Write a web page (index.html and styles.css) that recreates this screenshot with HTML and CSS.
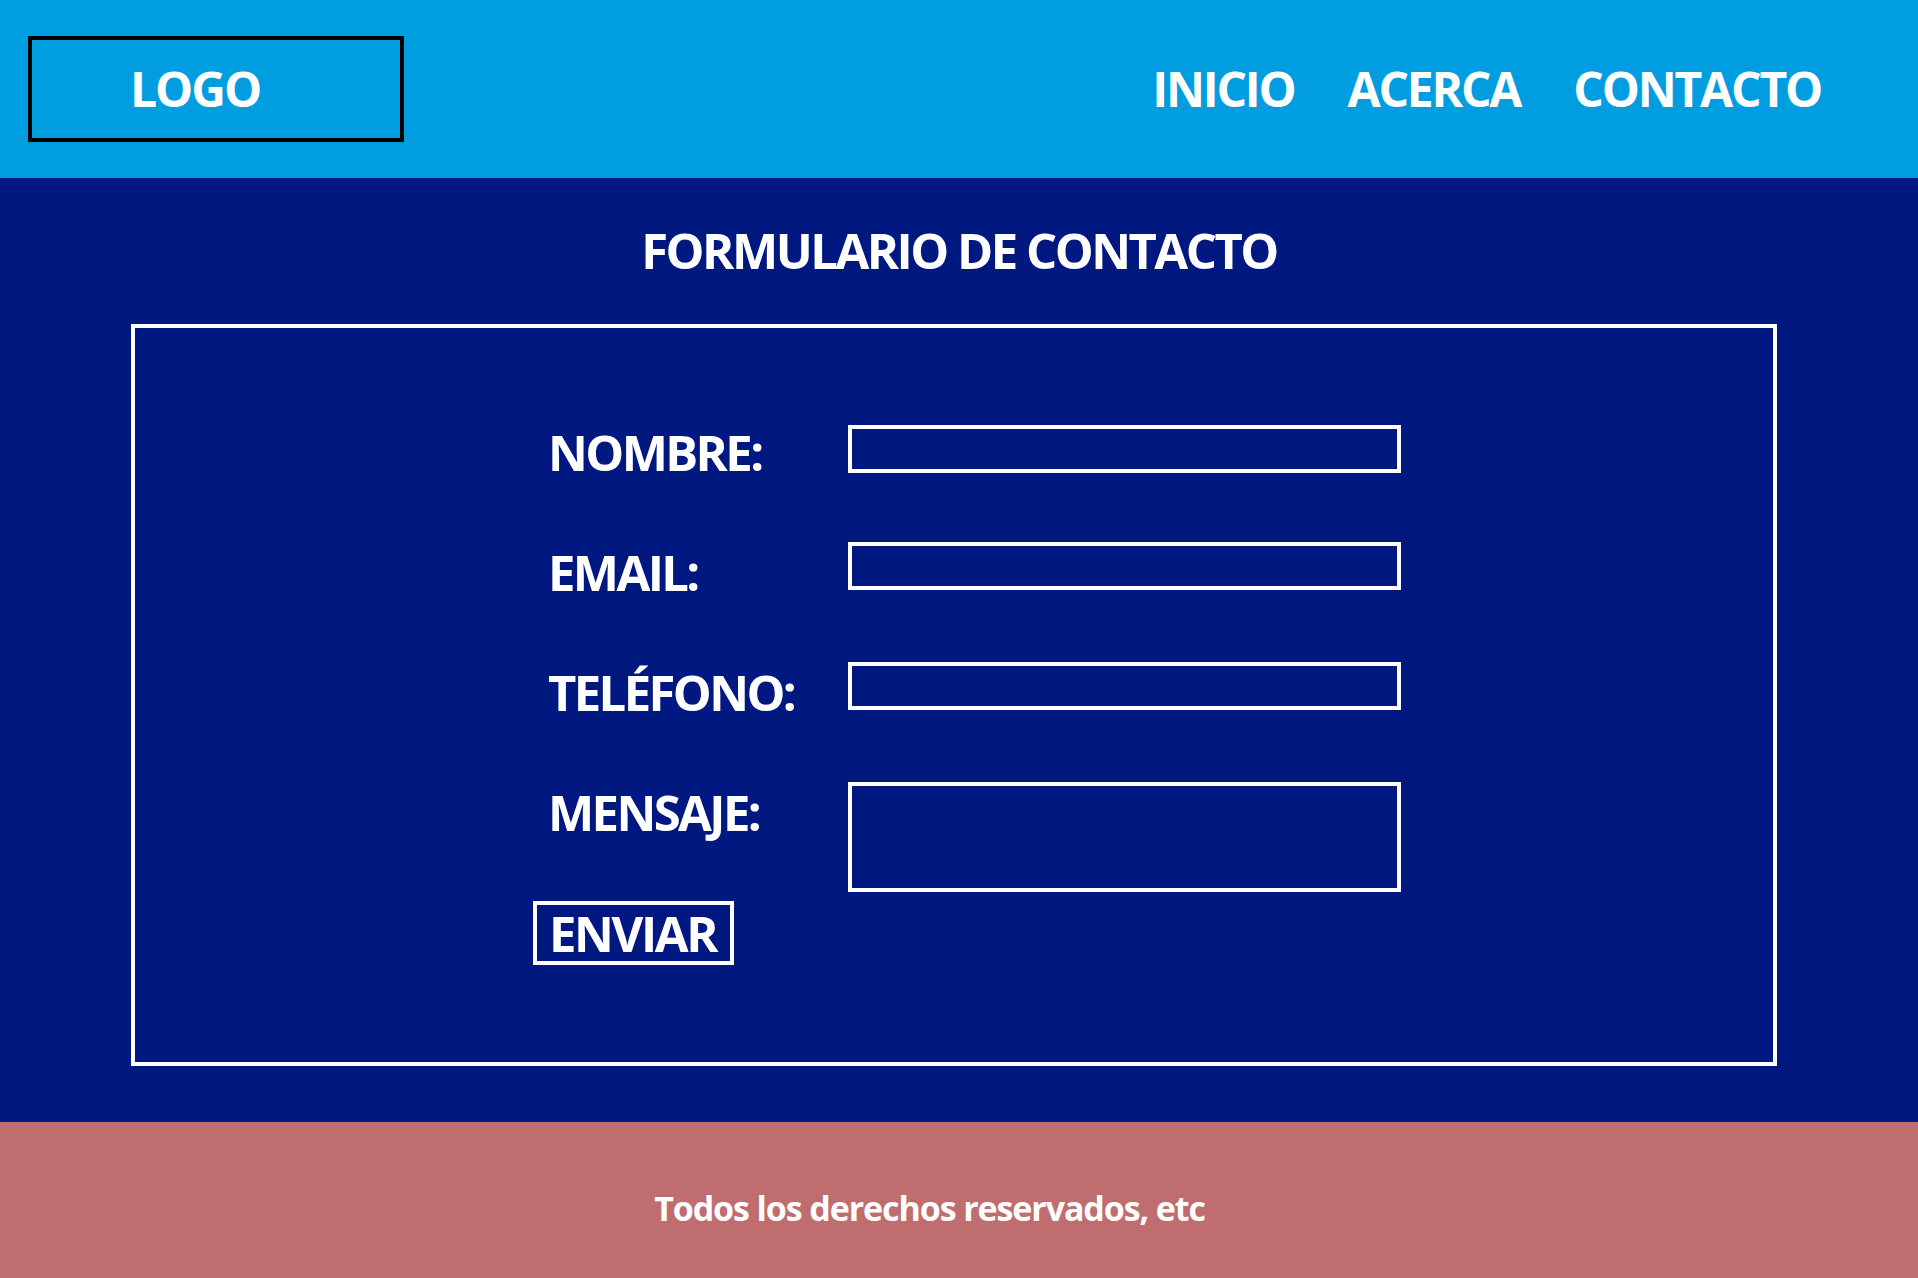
FILE: index.html
```html
<!DOCTYPE html>
<html lang="es">
<head>
<meta charset="utf-8">
<title>Formulario de contacto</title>
<link rel="stylesheet" href="styles.css">
</head>
<body>
<header class="site-header">
  <div class="logo">LOGO</div>
  <nav class="nav">
    <a class="nav-link" href="#">INICIO</a>
    <a class="nav-link" href="#">ACERCA</a>
    <a class="nav-link" href="#">CONTACTO</a>
  </nav>
</header>
<main class="main">
  <h1 class="title">FORMULARIO DE CONTACTO</h1>
  <form class="form-box">
    <div class="form-grid">
      <div class="row row-first">
        <label class="label" for="nombre">NOMBRE:</label>
        <input class="field" id="nombre" type="text">
      </div>
      <div class="row">
        <label class="label" for="email">EMAIL:</label>
        <input class="field" id="email" type="email">
      </div>
      <div class="row">
        <label class="label" for="tel">TELÉFONO:</label>
        <input class="field" id="tel" type="tel">
      </div>
      <div class="row row-msg">
        <label class="label" for="msg">MENSAJE:</label>
        <textarea class="field field-area" id="msg"></textarea>
      </div>
      <button class="send" type="button">ENVIAR</button>
    </div>
  </form>
</main>
<footer class="footer">
  <p class="footer-text">Todos los derechos reservados, etc</p>
</footer>
</body>
</html>
```

FILE: styles.css
```css
* { box-sizing: border-box; }
html, body { margin: 0; padding: 0; }
body {
  width: 1918px;
  height: 1278px;
  overflow: hidden;
  font-family: "Open Sans", "Liberation Sans", sans-serif;
  font-weight: 700;
  color: #ffffff;
}
.site-header {
  height: 178px;
  background: #009ee0;
  display: flex;
  align-items: center;
  padding: 0 97px 0 28px;
}
.logo {
  width: 376px;
  height: 106px;
  border: 4px solid #000;
  display: flex;
  align-items: center;
  padding-left: 98px;
  font-size: 48px;
  line-height: 1;
  letter-spacing: -2px;
}
.nav {
  margin-left: auto;
  display: flex;
  gap: 53px;
}
.nav-link {
  color: #fff;
  text-decoration: none;
  font-size: 48px;
  line-height: 1;
  letter-spacing: -2.2px;
}
.main {
  height: 944px;
  background: #001880;
  padding-top: 1px;
}
.title {
  margin: 0;
  margin-top: 41px;
  text-align: center;
  font-size: 49px;
  line-height: 60px;
  letter-spacing: -2.5px;
  font-weight: 700;
}
.form-box {
  margin: 44px 0 0 131px;
  width: 1646px;
  height: 742px;
  border: 4px solid #fff;
  padding: 97px 0 0 398px;
}
.form-grid {
  display: flex;
  flex-direction: column;
  align-items: flex-start;
}
.row {
  display: flex;
  align-items: flex-start;
  margin-top: 72px;
}
.row-first { margin-top: 0; }
.row-first + .row { margin-top: 69px; }
.label {
  width: 315px;
  height: 48px;
  padding-left: 15px;
  padding-top: 6px;
  font-size: 49px;
  line-height: 48px;
  letter-spacing: -2.6px;
  white-space: nowrap;
}
.row-first .label { padding-top: 3px; }
.field {
  width: 553px;
  height: 48px;
  border: 4px solid #fff;
  background: transparent;
  color: #fff;
  margin: 0;
  padding: 0 8px;
  outline: none;
  font: inherit;
  font-size: 20px;
}
.field-area {
  height: 110px;
  resize: none;
  display: block;
}
.send {
  margin-top: 9px;
  width: 201px;
  height: 64px;
  border: 4px solid #fff;
  background: transparent;
  color: #fff;
  font-family: inherit;
  font-weight: 700;
  font-size: 49px;
  line-height: 1;
  letter-spacing: -2.4px;
  padding: 0 0 0 12px;
  text-align: left;
}
.footer {
  height: 156px;
  background: #bf6d6e;
  display: flex;
  justify-content: center;
  padding-right: 59px;
}
.footer-text {
  margin: 0;
  margin-top: 62px;
  font-size: 34px;
  line-height: 48px;
  letter-spacing: -1.1px;
}
```
